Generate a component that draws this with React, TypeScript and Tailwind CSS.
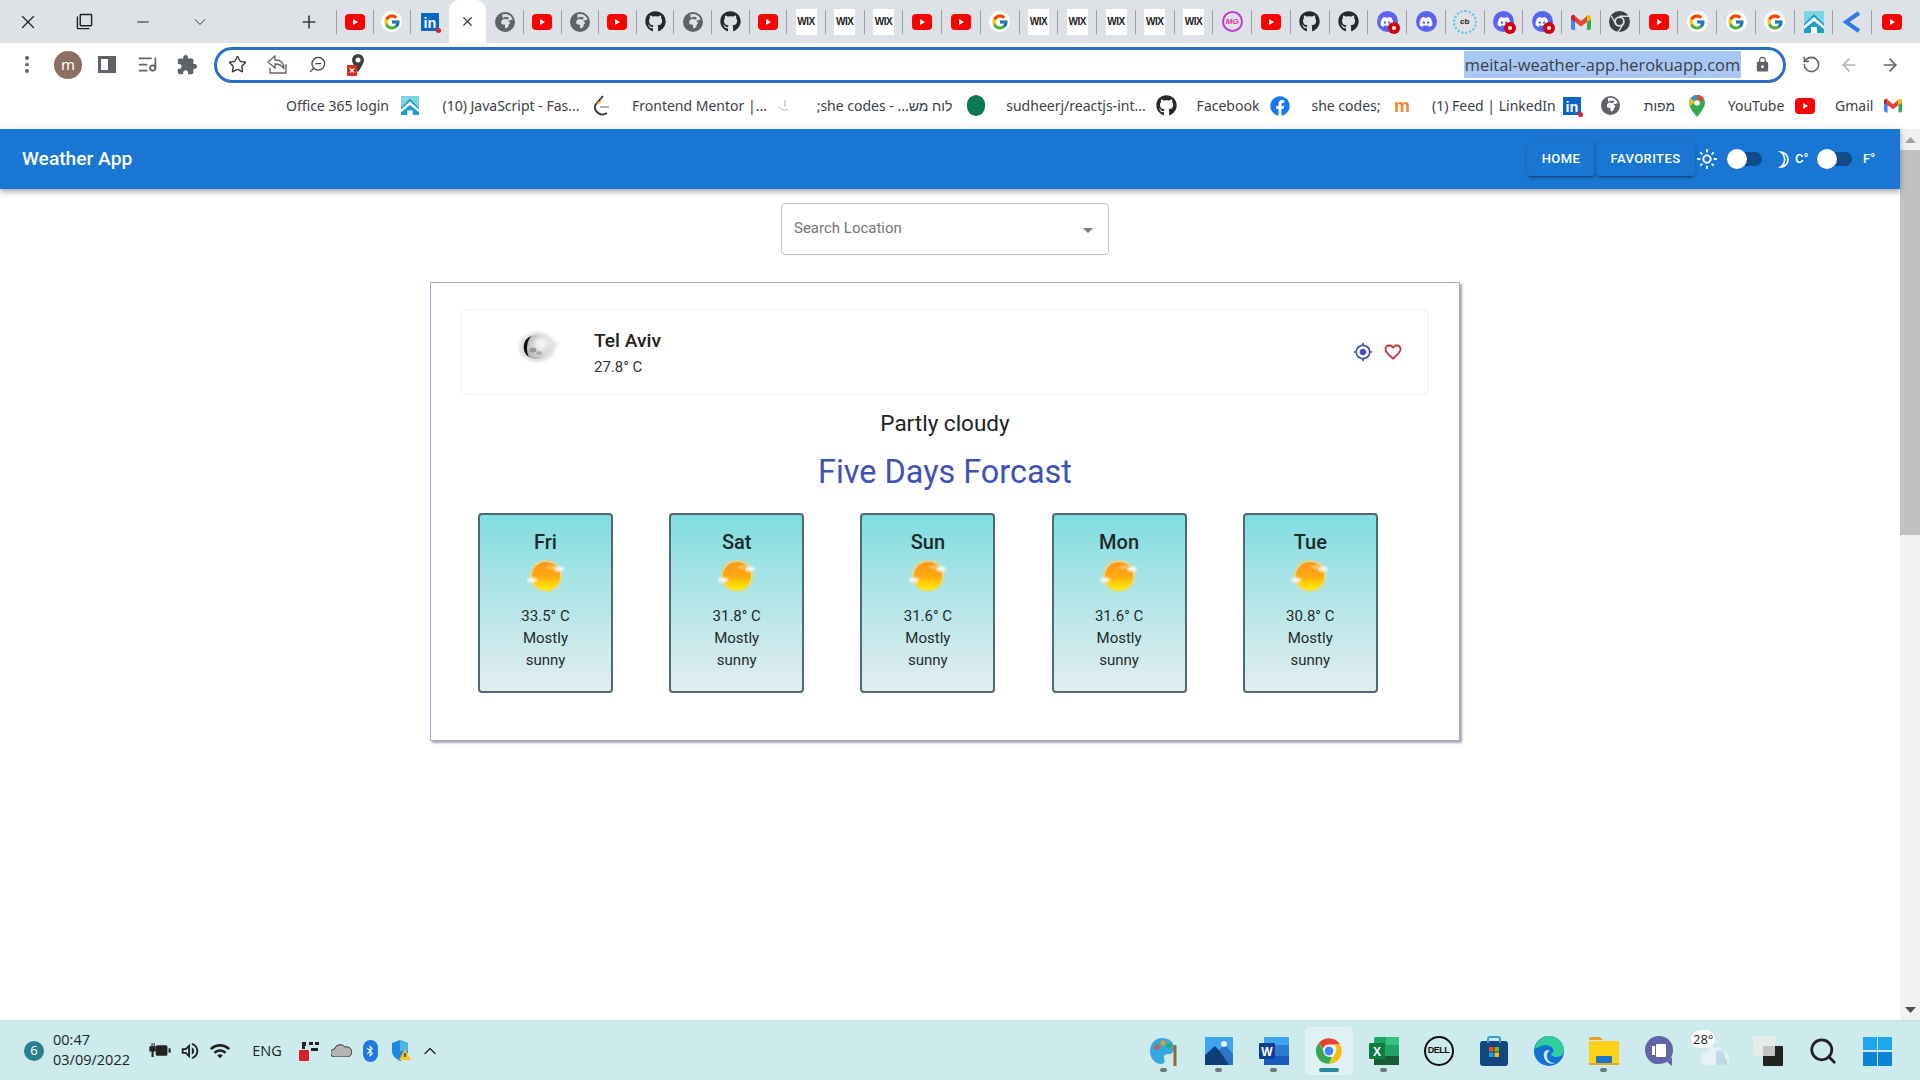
import React from "react";
import { FaGithub, FaFacebook, FaDiscord, FaBluetoothB } from "react-icons/fa";
import { FaEarthAfrica } from "react-icons/fa6";
import { FcGoogle } from "react-icons/fc";
import { MdMyLocation, MdFavoriteBorder, MdOutlineLightMode, MdOutlineBrightness3, MdExtension, MdLock, MdOutlineWifi, MdOutlineVolumeUp, MdOutlineFilterNone } from "react-icons/md";
import { X, Minus, ChevronDown, Plus, Star, RotateCw, ArrowLeft, ArrowRight, ZoomOut, ChevronUp, ListMusic, Search } from "lucide-react";

const Yt = ({ s = 20 }: { s?: number }) => (
  <svg width={s} height={s * 0.8} viewBox="0 0 20 16"><rect x="0" y="0" width="20" height="16" rx="4" fill="#f00" /><path d="M8 5l5 3-5 3z" fill="#fff" /></svg>
);
const G = () => (
  <div className="w-[21px] h-[21px] rounded-full bg-white flex items-center justify-center"><FcGoogle size={18} /></div>
);
const In = ({ s = 18 }: { s?: number }) => (
  <div className="relative bg-[#0a66c2] text-white font-bold flex items-end justify-center leading-none" style={{ width: s, height: s, fontSize: s * 0.8, fontFamily: "Liberation Sans" }}>
    in<span className="absolute right-[-2px] bottom-[-2px] w-[5px] h-[5px] rounded-full bg-[#e2202c]" />
  </div>
);
const Globe = ({ s = 20 }: { s?: number }) => <FaEarthAfrica size={s} color="#5f6368" />;
const Gh = ({ s = 21 }: { s?: number }) => <FaGithub size={s} color="#24292e" />;
const Wix = () => (
  <div className="w-[21px] h-[26px] bg-white flex items-center justify-center text-[10px] font-bold text-[#222] tracking-[-0.5px]" style={{ fontFamily: "Liberation Sans" }}>WIX</div>
);
const Disc = ({ red }: { red?: boolean }) => (
  <div className="relative w-[21px] h-[21px] rounded-full bg-[#5865f2] flex items-center justify-center">
    <FaDiscord size={14} color="#fff" />
    {red && <span className="absolute right-[-2px] bottom-[-2px] w-[12px] h-[12px] rounded-full bg-[#d40012] flex items-center justify-center"><span className="w-[4px] h-[4px] rounded-full bg-white" /></span>}
  </div>
);
const House = ({ s = 20 }: { s?: number }) => (
  <svg width={s} height={s * 1.1} viewBox="0 0 20 22"><rect width="20" height="22" fill="#1ba1c7" /><path d="M0 13L10 3l10 10v-13H0z" fill="#7fd3e6" /><path d="M0 15L10 6l10 9v3L10 10 0 18z" fill="#fff" /><rect x="7" y="16" width="6" height="6" fill="#fff" /></svg>
);
const Gmail = ({ s = 20 }: { s?: number }) => (
  <svg width={s} height={s * 0.8} viewBox="0 0 20 16"><path d="M0 2v12a2 2 0 002 2h2V7z" fill="#4285f4" /><path d="M20 2v12a2 2 0 01-2 2h-2V7z" fill="#34a853" /><path d="M4 8V2l6 5 6-5v6l-6 4.500z" fill="#ea4335" /><path d="M0 3a2.400 2.400 0 014-1.500V8L0 5z" fill="#c5221f" /><path d="M20 3a2.400 2.400 0 00-4-1.500V8l4-3z" fill="#fbbc04" /></svg>
);
const ChromeMono = () => (
  <svg width="21" height="21" viewBox="0 0 24 24"><circle cx="12" cy="12" r="12" fill="#3c4043" /><circle cx="12" cy="12" r="6" fill="#dee1e6" /><circle cx="12" cy="12" r="4" fill="#3c4043" /><path d="M12 6h11M8 15L2.500 5.500M16 15l-5.500 9" stroke="#dee1e6" strokeWidth="1.500" /></svg>
);
const Mg = () => (
  <div className="w-[21px] h-[21px] rounded-full border-2 border-[#c03ad8] flex items-center justify-center text-[8px] font-bold italic text-[#e0359c]" style={{ fontFamily: "Liberation Sans" }}>MG</div>
);
const Cb = () => (
  <div className="w-[24px] h-[24px] rounded-full border-2 border-dotted border-[#5cc0e0] flex items-center justify-center text-[8px] font-bold text-[#222]" style={{ fontFamily: "Liberation Sans" }}>cb</div>
);
const Less = () => (
  <svg width="22" height="22" viewBox="0 0 22 22"><path d="M18 2L5 11l13 9" fill="none" stroke="#2c7be5" strokeWidth="4" /></svg>
);

type Tab = "yt" | "g" | "in" | "x" | "gl" | "gh" | "wix" | "mg" | "dr" | "d" | "cb" | "m" | "ch" | "h" | "l";
const tabs: Tab[] = ["yt","g","in","x","gl","yt","gl","yt","gh","gl","gh","yt","wix","wix","wix","yt","yt","g","wix","wix","wix","wix","wix","mg","yt","gh","gh","dr","d","cb","dr","dr","m","ch","yt","g","g","g","h","l","yt"];

const TabIcon = ({ t }: { t: Tab }) => {
  switch (t) {
    case "yt": return <Yt />;
    case "g": return <G />;
    case "in": return <In />;
    case "x": return <X size={15} color="#3c4043" strokeWidth={2} />;
    case "gl": return <Globe />;
    case "gh": return <Gh />;
    case "wix": return <Wix />;
    case "mg": return <Mg />;
    case "dr": return <Disc red />;
    case "d": return <Disc />;
    case "cb": return <Cb />;
    case "m": return <Gmail />;
    case "ch": return <ChromeMono />;
    case "h": return <House />;
    case "l": return <Less />;
  }
};

const TabStrip = () => (
  <div className="h-[43px] bg-[#dee1e6] flex items-center shrink-0 overflow-hidden">
    <div className="w-[56px] flex justify-center"><X size={22} color="#202124" strokeWidth={1.3} /></div>
    <div className="w-[56px] flex justify-center"><MdOutlineFilterNone size={17} color="#202124" /></div>
    <div className="w-[62px] flex justify-center"><Minus size={18} color="#202124" strokeWidth={1.6} /></div>
    <div className="w-[52px] flex justify-center"><ChevronDown size={20} color="#3c4043" strokeWidth={1.2} /></div>
    <div className="w-[110px] flex justify-end pr-[17px]"><Plus size={20} color="#3c4043" strokeWidth={2} /></div>
    {tabs.map((t, i) =>
      t === "x" ? (
        <div key={i} className="w-[37.600px] h-[43px] flex items-center justify-center bg-white rounded-t-[10px] shrink-0 self-end"><TabIcon t={t} /></div>
      ) : (
        <div key={i} className={`${i < 12 ? "w-[37.600px]" : "w-[38.750px]"} h-[24px] flex items-center justify-center shrink-0 ${i < 40 && tabs[i + 1] !== "x" ? "border-r border-[#9aa0a6]" : ""} ${i === 0 ? "border-l" : ""}`}>
          <TabIcon t={t} />
        </div>
      )
    )}
  </div>
);

const Toolbar = () => (
  <div className="h-[43px] bg-white flex items-center shrink-0">
    <div className="w-[54px] flex justify-center">
      <div className="flex flex-col gap-[3px]"><span className="w-[3.500px] h-[3.500px] rounded-full bg-[#5f6368]" /><span className="w-[3.500px] h-[3.500px] rounded-full bg-[#5f6368]" /><span className="w-[3.500px] h-[3.500px] rounded-full bg-[#5f6368]" /></div>
    </div>
    <div className="w-[28px] h-[28px] rounded-full bg-[#8d6e63] text-white text-[15px] flex items-center justify-center" style={{ fontFamily: "Noto Sans" }}>m</div>
    <div className="w-[39px] pl-[4px] flex justify-center ml-[3px]"><div className="w-[18px] h-[17px] border-[3px] border-r-[8px] border-[#5f6368]" /></div>
    <div className="w-[40px] ml-[3px] flex justify-center"><ListMusic size={21} color="#5f6368" /></div>
    <div className="w-[40px] flex justify-center"><MdExtension size={22} color="#5f6368" /></div>
    <div className="ml-[7px] w-[1572px] h-[36px] rounded-full border-[3px] border-[#2a6fc9] flex items-center">
      <div className="w-[40px] flex justify-center"><Star size={19} color="#3c4043" strokeWidth={1.8} /></div>
      <div className="w-[40px] flex justify-center">
        <svg width="20" height="19" viewBox="0 0 20 19" fill="none" stroke="#5f6368" strokeWidth="1.300"><path d="M8 1L1 7l7 6V9c4 0 7 1 9 5 0-6-3-9-9-9z" /><path d="M3 13v5h16V9" /></svg>
      </div>
      <div className="w-[40px] flex justify-center"><ZoomOut size={19} color="#3c4043" strokeWidth={1.6} className="-scale-x-100" /></div>
      <div className="w-[38px] flex justify-center">
        <svg width="18" height="22" viewBox="0 0 18 22"><path d="M11 0a6 6 0 00-6 6c0 4 6 12 6 12s6-8 6-12a6 6 0 00-6-6z" fill="#3c4043" /><circle cx="11" cy="6" r="2.500" fill="#fff" /><rect x="0" y="11" width="10" height="11" fill="#d93025" /><path d="M3 14.500l4 4m0-4l-4 4" stroke="#fff" strokeWidth="1.200" /></svg>
      </div>
      <div className="flex-1 flex justify-end">
        <span className="bg-[#a8c7f5] text-[#3c4043] text-[16.400px] h-[27px] leading-[27px] w-[277px] whitespace-nowrap text-center" style={{ fontFamily: "Open Sans" }}>meital-weather-app.herokuapp.com</span>
      </div>
      <div className="w-[42px] flex justify-center"><MdLock size={17} color="#5f6368" /></div>
    </div>
    <div className="w-[50px] flex justify-center"><RotateCw size={19} color="#5f6368" className="-scale-x-100" /></div>
    <div className="w-[26px] flex justify-center"><ArrowLeft size={20} color="#b0b3b8" /></div>
    <div className="w-[56px] flex justify-center"><ArrowRight size={20} color="#5f6368" /></div>
  </div>
);

const Bookmark = ({ text, icon, rtl, w }: { text: string; icon: React.ReactNode; rtl?: boolean; w: number }) => (
  <div className="flex items-center">
    <span dir={rtl ? "rtl" : undefined} className="text-[#3c4043] text-[14px] whitespace-nowrap text-center" style={{ width: w, fontFamily: "'Noto Sans', 'Liberation Sans', sans-serif" }}>{text}</span>
    <div className="w-[40px] flex justify-center">{icon}</div>
  </div>
);

const Bookmarks = () => (
  <div className="h-[43px] bg-white flex items-center justify-end shrink-0 pr-[7px] pb-[4px] gap-[10px]">
    <Bookmark w={105} text="Office 365 login" icon={<House s={18} />} />
    <Bookmark w={142} text="(10) JavaScript - Fas..." icon={<svg width="16" height="22" viewBox="0 0 16 22" fill="none"><path d="M9 1L2 9c-2 3-1 6 1 8 3 3 7 3 10 1" stroke="#333" strokeWidth="1.800" /><path d="M6 12h9" stroke="#aaa" strokeWidth="1.800" /><path d="M3 9l4-3" stroke="#f89f1b" strokeWidth="1.800" /></svg>} />
    <Bookmark w={131} text="Frontend Mentor |..." icon={<svg width="12" height="14" viewBox="0 0 12 14" fill="none" stroke="#9fb6c8" strokeWidth="1"><path d="M8 1v7M2 7c1 4 6 5 9 3" /></svg>} />
    <Bookmark w={143} rtl text="לוח מש... - she codes;" icon={<div className="w-[18px] h-[21px] rounded-full bg-[#0d7a57]" />} />
    <Bookmark w={140} text="sudheerj/reactjs-int..." icon={<Gh s={21} />} />
    <Bookmark w={64} text="Facebook" icon={<FaFacebook size={20} color="#1877f2" />} />
    <Bookmark w={72} text="she codes;" icon={<span className="text-[#f0882a] font-bold text-[18px] leading-none" style={{ fontFamily: "Liberation Sans" }}>m</span>} />
    <Bookmark w={120} text="(1) Feed | LinkedIn" icon={<In s={18} />} />
    <div className="w-[20px] ml-[-2px] mr-[12px] flex justify-center"><Globe s={19} /></div>
    <Bookmark w={35} rtl text="מפות" icon={
      <svg width="16" height="22" viewBox="0 0 16 22"><path d="M8 0a8 8 0 00-8 8c0 5 8 14 8 14s8-9 8-14a8 8 0 00-8-8z" fill="#34a853" /><path d="M2 3l4 4-5 4A8 8 0 012 3z" fill="#fbbc04" /><path d="M8 0a8 8 0 00-6 3l4 4z" fill="#4285f4" /><path d="M8 0a8 8 0 017 4l-5 3z" fill="#ea4335" /><circle cx="8" cy="8" r="2.800" fill="#fff" /></svg>
    } />
    <Bookmark w={58} text="YouTube" icon={<Yt s={20} />} />
    <Bookmark w={38} text="Gmail" icon={<Gmail s={18} />} />
  </div>
);

const Toggle = () => (
  <div className="relative w-[35px] h-[20px] flex items-center">
    <div className="w-full h-[14px] rounded-full bg-[#0f4c88]" />
    <div className="absolute left-0 top-0 w-[20px] h-[20px] rounded-full bg-white" />
  </div>
);

const AppBar = () => (
  <div className="h-[60px] bg-[#1976d2] flex items-center text-white shadow-[0_2px_4px_-1px_rgba(0,0,0,.2),0_4px_5px_0_rgba(0,0,0,.14),0_1px_10px_0_rgba(0,0,0,.12)] shrink-0 relative z-10" style={{ fontFamily: "Roboto" }}>
    <div className="ml-[22px] text-[19.200px] font-medium">Weather App</div>
    <div className="ml-auto flex items-center">
      <button className="w-[68px] h-[33px] rounded-[4px] text-[13px] font-medium tracking-[.4px] shadow-[0_3px_1px_-2px_rgba(0,0,0,.2),0_2px_2px_0_rgba(0,0,0,.14),0_1px_5px_0_rgba(0,0,0,.12)]">HOME</button>
      <button className="ml-[1px] w-[99px] h-[33px] rounded-[4px] text-[13px] font-medium tracking-[.4px] shadow-[0_3px_1px_-2px_rgba(0,0,0,.2),0_2px_2px_0_rgba(0,0,0,.14),0_1px_5px_0_rgba(0,0,0,.12)]">FAVORITES</button>
      <div className="w-[22px] ml-[1px] flex justify-center"><MdOutlineLightMode size={22} /></div>
      <div className="ml-[9px]"><Toggle /></div>
      <div className="ml-[11px] w-[20px] flex justify-center"><MdOutlineBrightness3 size={25} /></div>
      <span className="ml-[2px] w-[22px] text-[13px] font-medium">C°</span>
      <Toggle />
      <span className="ml-[11px] w-[13px] text-[13px] font-medium whitespace-nowrap">F°</span>
      <div className="w-[24px]" />
    </div>
  </div>
);

const MoonPic = () => (
  <svg width="46" height="40" viewBox="0 0 46 40">
    <defs>
      <radialGradient id="mg" cx="0.7" cy="0.45" r="0.75"><stop offset="0" stopColor="#f4f4f4" /><stop offset="0.55" stopColor="#cfcfcf" /><stop offset="1" stopColor="#9a9a9a" /></radialGradient>
      <filter id="bl" x="-30%" y="-30%" width="160%" height="160%"><feGaussianBlur stdDeviation="1.800" /></filter>
      <filter id="bl2" x="-10%" y="-10%" width="120%" height="120%"><feGaussianBlur stdDeviation="0.500" /></filter>
    </defs>
    <ellipse cx="23" cy="20" rx="18" ry="15" fill="#d8d8d8" filter="url(#bl)" opacity="0.8" />
    <ellipse cx="36" cy="17" rx="9" ry="2.500" fill="#e4e4e4" filter="url(#bl)" />
    <circle cx="22" cy="20" r="12" fill="url(#mg)" filter="url(#bl2)" />
    <path d="M17 9a12 12 0 00-2 21c-3-6-3-14 2-21z" fill="#111" filter="url(#bl2)" />
    <ellipse cx="28" cy="16" rx="6" ry="5" fill="#f2f2f2" filter="url(#bl)" />
    <ellipse cx="19" cy="23" rx="3.500" ry="2.500" fill="#8c8c8c" filter="url(#bl2)" opacity="0.8" />
    <ellipse cx="25" cy="26" rx="3" ry="2" fill="#a5a5a5" filter="url(#bl2)" opacity="0.8" />
  </svg>
);

const SunPic = ({ id }: { id: string }) => (
  <svg width="40" height="36" viewBox="0 0 40 36">
    <defs>
      <linearGradient id={`s${id}`} x1="0" y1="0" x2="0" y2="1"><stop offset="0" stopColor="#ff961e" /><stop offset="0.5" stopColor="#ffa80f" /><stop offset="0.85" stopColor="#ffdc00" /><stop offset="1" stopColor="#fff200" /></linearGradient>
      <filter id={`b${id}`} x="-30%" y="-30%" width="160%" height="160%"><feGaussianBlur stdDeviation="1" /></filter>
    </defs>
    <circle cx="20" cy="18" r="16" fill="#f6d76a" filter={`url(#b${id})`} opacity="0.85" />
    <circle cx="20" cy="18" r="14" fill={`url(#s${id})`} />
    <ellipse cx="33" cy="11" rx="5" ry="2.500" fill="#f4f4f4" filter={`url(#b${id})`} />
    <ellipse cx="6" cy="22" rx="5" ry="2.500" fill="#f4f4f4" filter={`url(#b${id})`} />
    <ellipse cx="25" cy="9" rx="4" ry="1.500" fill="#ffe0a0" opacity="0.7" filter={`url(#b${id})`} />
  </svg>
);

const days = [
  ["Fri", "33.5° C"],
  ["Sat", "31.8° C"],
  ["Sun", "31.6° C"],
  ["Mon", "31.6° C"],
  ["Tue", "30.8° C"],
];

const DayCard = ({ d, t }: { d: string; t: string }) => (
  <div className="w-[135px] h-[180px] border-2 border-[#4f6a70] rounded-[4px] bg-gradient-to-b from-[#7fdde0] to-[#e3edf0] flex flex-col items-center pt-[13px] text-[#1d2a2c]">
    <div className="text-[20px] font-medium leading-[28px]">{d}</div>
    <div className="mt-[2px] h-[36px]"><SunPic id={d} /></div>
    <div className="mt-[11px] text-[15px] leading-[22px] w-[80px] text-center">{t}<br />Mostly sunny</div>
  </div>
);

const Main = () => (
  <div className="flex-1 min-w-0 flex flex-col items-center pr-[10px] bg-white" style={{ fontFamily: "Roboto" }}>
    <div className="mt-[14px] w-[328px] h-[52px] border border-[#c4c4c4] rounded-[4px] flex items-center justify-between pl-[12px] pr-[15px] pb-[1px]">
      <span className="text-[15px] text-[#757575]">Search Location</span>
      <svg width="10" height="5" viewBox="0 0 10 5" className="mt-[4px]"><path d="M0 0h10L5 5z" fill="#757575" /></svg>
    </div>
    <div className="mt-[27px] w-[1030px] h-[459px] border border-[#a9a9d0] shadow-[2px_2px_2px_rgba(90,90,130,.55)] px-[30px] pt-[26px] bg-white">
      <div className="w-[968px] h-[86px] border border-[#eeeeee] rounded-[6px] flex items-center text-[#231f20]">
        <div className="ml-[52px] w-[46px] mt-[-10px]"><MoonPic /></div>
        <div className="ml-[34px] flex flex-col">
          <div className="text-[19.200px] font-medium leading-[28px]">Tel Aviv</div>
          <div className="text-[15px] leading-[22px] mt-[1px] text-[#333]">27.8° C</div>
        </div>
        <div className="ml-auto flex items-center gap-[10px] mr-[25px] text-[#3f51b5]">
          <MdMyLocation size={20} />
          <MdFavoriteBorder size={20} color="#c62828" />
        </div>
      </div>
      <div className="mt-[10px] text-center text-[22.500px] leading-[36px] text-[#222]">Partly cloudy</div>
      <div className="mt-[7px] text-center text-[32.400px] leading-[48px] text-[#3f51b5]">Five Days Forcast</div>
      <div className="mt-[17px] ml-[17px] flex gap-[56.200px]">
        {days.map(([d, t]) => <DayCard key={d} d={d} t={t} />)}
      </div>
    </div>
  </div>
);

const ScrollBar = () => (
  <div className="w-[20px] bg-[#f1f1f1] flex flex-col items-center shrink-0">
    <div className="h-[21px] flex items-center"><svg width="11" height="6" viewBox="0 0 11 6"><path d="M5.500 0L11 6H0z" fill="#a3a3a3" /></svg></div>
    <div className="w-full h-[385px] bg-[#c1c1c1]" />
    <div className="flex-1" />
    <div className="h-[21px] flex items-center"><svg width="11" height="6" viewBox="0 0 11 6"><path d="M5.500 6L11 0H0z" fill="#505050" /></svg></div>
  </div>
);

const TaskIcon = ({ children, dot, active }: { children: React.ReactNode; dot?: boolean; active?: boolean }) => (
  <div className="relative w-[55px] h-[48px] flex items-center justify-center">
    {active && <div className="absolute left-[4px] top-0 w-[48px] h-[48px] rounded-[5px] bg-[#e0f1f4] border border-[#e6f3f6]" />}
    <div className="relative">{children}</div>
    {dot && !active && <span className="absolute bottom-[3px] left-[24px] w-[7px] h-[4px] rounded-full bg-[#6d7a7c]" />}
    {active && <span className="absolute bottom-[3px] left-[18px] w-[20px] h-[4px] rounded-full bg-[#2b8a98]" />}
  </div>
);

const Taskbar = () => (
  <div className="h-[60px] bg-[#cdeaec] border-t border-[#c5e0e3] flex items-center shrink-0 text-[#1b2526]" style={{ fontFamily: "Open Sans" }}>
    <div className="ml-[24px] w-[20px] h-[20px] rounded-full bg-[#2b7f8d] text-white text-[13px] flex items-center justify-center">6</div>
    <div className="ml-[9px] w-[85px] flex flex-col text-[14.500px] leading-[20px] pb-[2px]"><span>00:47</span><span>03/09/2022</span></div>
    <div className="ml-[7px] w-[30px] flex justify-center">
      <svg width="22" height="17" viewBox="0 0 20 16"><rect x="6" y="3" width="11" height="10" rx="1.500" fill="#222" /><rect x="18" y="6" width="2" height="4" fill="#222" /><path d="M0 4h2V1h1v3h1V1h1v3h1v5H0zM2 9h2v5H2z" fill="#222" /></svg>
    </div>
    <div className="w-[30px] flex justify-center"><MdOutlineVolumeUp size={22} color="#222" /></div>
    <div className="w-[30px] flex justify-center"><MdOutlineWifi size={22} color="#222" /></div>
    <div className="ml-[5px] w-[54px] text-center text-[14.500px]">ENG</div>
    <div className="w-[30px] flex justify-center">
      <svg width="20" height="20" viewBox="0 0 20 20"><rect x="0" y="9" width="10" height="11" rx="1" fill="#d3202c" /><path d="M3 1h4v4H3zM10 1h4v3h-4zM16 1h4v3h-4zM12 7h7v3h-7zM3 5h3v3H3z" fill="#222" /></svg>
    </div>
    <div className="w-[34px] flex justify-center">
      <svg width="21" height="13" viewBox="0 0 21 13"><path d="M4 13a4 4 0 01-.5-8A6 6 0 0114 3a4.500 4.500 0 013 10z" fill="#b5b5b5" stroke="#333" strokeWidth="1" /></svg>
    </div>
    <div className="w-[24px] flex justify-center"><div className="w-[15px] h-[22px] rounded-full bg-[#1f7ae0] flex items-center justify-center"><FaBluetoothB size={12} color="#fff" /></div></div>
    <div className="w-[37px] flex justify-center">
      <svg width="20" height="21" viewBox="0 0 20 21"><path d="M9 0l8 3v8c0 5-4 8-8 10-4-2-8-5-8-10V3z" fill="#1e88e5" /><path d="M9 0l8 3v8H9z" fill="#4fb3e8" /><path d="M14 9l6 11H8z" fill="#f7c325" /><path d="M14 13v4" stroke="#222" strokeWidth="1.300" /></svg>
    </div>
    <div className="w-[22px] flex justify-center"><ChevronUp size={20} color="#222" strokeWidth={1.5} /></div>

    <div className="ml-auto flex items-center mr-[15px] self-start pt-[6px]">
      <TaskIcon dot>
        <svg width="28" height="30" viewBox="0 0 28 30"><path d="M12 2C5 2 0 8 0 15s5 13 11 13c4 0 4-3 3-6s2-4 5-4 5-2 5-6C24 6 19 2 12 2z" fill="#35a8e0" /><circle cx="7" cy="11" r="2.500" fill="#e74c3c" /><circle cx="13" cy="7" r="2.500" fill="#f39c12" /><circle cx="19" cy="10" r="2.500" fill="#27ae60" /><path d="M25 9v21" stroke="#8a6a3a" strokeWidth="3" /></svg>
      </TaskIcon>
      <TaskIcon dot>
        <svg width="28" height="28" viewBox="0 0 28 28"><rect width="28" height="28" fill="#3ea6f0" /><path d="M0 28V18l10-9 18 19z" fill="#0f3f78" /><path d="M14 13l6-5 8 9v11h-4z" fill="#2b74c8" /><circle cx="19" cy="7" r="3" fill="#e6f2fb" /></svg>
      </TaskIcon>
      <TaskIcon dot>
        <svg width="30" height="28" viewBox="0 0 30 28"><rect x="5" width="25" height="28" rx="2" fill="#2b7cd3" /><rect x="5" width="25" height="8" fill="#41a5ee" /><rect x="5" y="19" width="25" height="9" fill="#185abd" /><rect y="6" width="16" height="16" rx="1" fill="#103f91" /><text x="8" y="18.500" textAnchor="middle" fontSize="12" fontWeight="700" fill="#fff" fontFamily="Liberation Sans">W</text></svg>
      </TaskIcon>
      <TaskIcon active>
        <svg width="28" height="28" viewBox="0 0 24 24"><path d="M12 1a11 11 0 019.500 5.500H12a5.500 5.500 0 00-5.200 3.800L3.400 5A11 11 0 0112 1z" fill="#ea4335" /><path d="M21.500 6.500A11 11 0 0112 23l4.700-8.200a5.500 5.500 0 00-.5-8.300z" fill="#fbbc04" /><path d="M12 23A11 11 0 013.400 5l4.700 8.200a5.500 5.500 0 006.500 4z" fill="#34a853" /><circle cx="12" cy="12" r="4.300" fill="#4285f4" stroke="#fff" strokeWidth="1" /></svg>
      </TaskIcon>
      <TaskIcon dot>
        <svg width="30" height="28" viewBox="0 0 30 28"><rect x="5" width="25" height="28" rx="2" fill="#21a366" /><rect x="17" width="13" height="8" fill="#33c481" /><rect x="5" y="19" width="25" height="9" fill="#185c37" /><rect y="6" width="16" height="16" rx="1" fill="#107c41" /><text x="8" y="18.500" textAnchor="middle" fontSize="12" fontWeight="700" fill="#fff" fontFamily="Liberation Sans">X</text></svg>
      </TaskIcon>
      <TaskIcon>
        <div className="w-[30px] h-[30px] rounded-full border-[2.500px] border-[#111] flex items-center justify-center text-[9px] font-bold text-[#111] tracking-[-0.5px]" style={{ fontFamily: "Liberation Sans" }}>DELL</div>
      </TaskIcon>
      <TaskIcon>
        <svg width="28" height="30" viewBox="0 0 28 30"><rect y="5" width="28" height="25" rx="3" fill="#12467f" /><path d="M8 7V3a2 2 0 012-2h8a2 2 0 012 2v4" fill="none" stroke="#2b9fe0" strokeWidth="2" /><rect x="9" y="11" width="4.500" height="4.500" fill="#f25022" /><rect x="14.500" y="11" width="4.500" height="4.500" fill="#7fba00" /><rect x="9" y="16.500" width="4.500" height="4.500" fill="#00a4ef" /><rect x="14.500" y="16.500" width="4.500" height="4.500" fill="#ffb900" /></svg>
      </TaskIcon>
      <TaskIcon>
        <svg width="30" height="30" viewBox="0 0 30 30"><circle cx="15" cy="15" r="15" fill="#1173d6" /><path d="M1 12C3 4 9 0 15 0c9 0 15 7 15 14 0 5-4 7-8 7-3 0-5-2-5-3 2-1 3-3 2-5-2-4-8-5-12-3-3 1-5 3-6 2z" fill="#2fcf9a" /><path d="M14 14c-3 0-5 3-4 7 1 5 6 8 11 6-5 0-8-3-8-7 0-3 1-5 3-5z" fill="#cdeaec" /></svg>
      </TaskIcon>
      <TaskIcon dot>
        <svg width="30" height="28" viewBox="0 0 30 28"><path d="M0 2a2 2 0 012-2h9l3 3H0z" fill="#e0a72a" /><rect y="4" width="30" height="24" fill="#fcd116" /><rect x="7" y="19" width="16" height="7" rx="1" fill="#1b75c9" /><rect y="26" width="30" height="2" fill="#e0a72a" /></svg>
      </TaskIcon>
      <TaskIcon>
        <svg width="28" height="30" viewBox="0 0 28 30"><path d="M14 0a14 14 0 0114 14c0 8-6 14-14 14h-2l-1 0C5 27 0 21 0 14A14 14 0 0114 0z" fill="#6264a7" /><path d="M22 26l5 4v-9z" fill="#6264a7" /><rect x="11" y="8" width="10" height="13" rx="1" fill="#fff" /><rect x="7" y="10" width="3" height="9" fill="#fff" /></svg>
      </TaskIcon>
      <div className="relative w-[54px] h-[48px] flex items-center justify-center">
        <svg width="34" height="22" viewBox="0 0 36 24" className="mt-[10px] ml-[6px]"><path d="M8 22a7 7 0 010-14 10 10 0 0118 0 7 7 0 010 14z" fill="#e6f2f6" /><path d="M18 6a8 8 0 0110 8 6 6 0 011 8H18z" fill="#c0d9e6" /></svg>
        <span className="absolute left-[5px] top-[3px] bg-white rounded-[10px] px-[2px] text-[13px] leading-[18px] text-[#222]">28°</span>
      </div>
      <TaskIcon>
        <div className="relative w-[30px] h-[30px]">
          <div className="absolute right-0 bottom-0 w-[20px] h-[20px] bg-[#222] rounded-[1px]" />
          <div className="absolute left-0 top-0 w-[22px] h-[20px] bg-[#ececec]/80 rounded-[1px]" />
        </div>
      </TaskIcon>
      <TaskIcon><Search size={30} color="#222" strokeWidth={2.200} /></TaskIcon>
      <TaskIcon>
        <div className="grid grid-cols-2 gap-[1.500px] w-[29px] h-[29px]">
          <div className="bg-[#1ea7ee]" /><div className="bg-[#1ea7ee]" /><div className="bg-[#0b84d8]" /><div className="bg-[#0b84d8]" />
        </div>
      </TaskIcon>
    </div>
  </div>
);

export default function App() {
  return (
    <div className="w-[1920px] h-[1080px] overflow-hidden flex flex-col bg-white">
      <TabStrip />
      <Toolbar />
      <Bookmarks />
      <div className="flex-1 min-h-0 flex">
        <div className="flex-1 min-w-0 flex flex-col">
          <AppBar />
          <Main />
        </div>
        <ScrollBar />
      </div>
      <Taskbar />
    </div>
  );
}
